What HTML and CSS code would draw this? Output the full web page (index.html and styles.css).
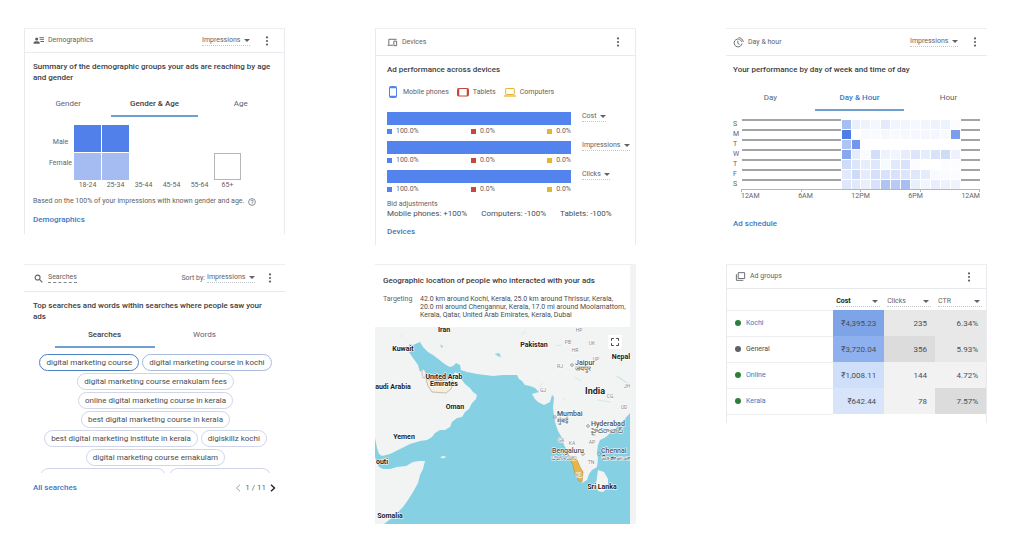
FILE: index.html
```html
<!DOCTYPE html>
<html lang="en">
<head>
    <meta charset="UTF-8">
    <meta name="viewport" content="width=device-width, initial-scale=1.0">
    <title>Campaign Overview</title>
    <link rel="stylesheet" href="styles.css">
</head>
<body>

<main class="dashboard">

    <!-- Demographics -->
    <section class="card compact sides">
        <header class="card-head">
            <svg class="icon" viewBox="0 0 12 10"><path d="M4 1.6a1.7 1.7 0 1 1 0 3.4 1.7 1.7 0 0 1 0-3.4zM.6 8.6V7.4C.8 6.200 2.600 5.700 4 5.700s3.200.5 3.400 1.700v1.200zM7 1.500h5v1H7zM7.300 3.500H12v1H7.300zM8 5.500h4v1H8z" fill="#5f6368"/></svg>
            <span class="name">Demographics</span>
            <label class="pick"><select aria-label="Metric"><option>Impressions</option></select></label>
            <button class="more" aria-label="More options"><svg viewBox="0 0 4 10"><circle cx="2" cy="1.400" r="1.100"/><circle cx="2" cy="5" r="1.100"/><circle cx="2" cy="8.600" r="1.100"/></svg></button>
        </header>
        <h2>Summary of the demographic groups your ads are reaching by age and gender</h2>
        <nav class="tabs spaced">
            <button>Gender</button>
            <button class="on dark">Gender &amp; Age</button>
            <button>Age</button>
        </nav>
        <div class="age-chart">
            <div class="genders"><span>Male</span><span>Female</span></div>
            <div class="squares">
                <i class="strong"></i><i class="strong"></i><i></i><i></i><i></i><i></i>
                <i class="soft"></i><i class="soft"></i><i></i><i></i><i></i><i class="empty"></i>
                <span>18-24</span><span>25-34</span><span>35-44</span><span>45-54</span><span>55-64</span><span>65+</span>
            </div>
        </div>
        <p class="note">Based on the 100% of your impressions with known gender and age.
            <svg class="help" viewBox="0 0 8 8" fill="none" stroke="#5f6368" stroke-width=".7"><circle cx="4" cy="4" r="3.400"/><path d="M2.900 3.200c0-1.500 2.300-1.500 2.300 0C5.200 4 4 4 4 5M4 5.500v.8"/></svg>
        </p>
        <a class="more-link" href="#">Demographics</a>
    </section>

    <!-- Devices -->
    <section class="card sides devices">
        <header class="card-head">
            <svg class="icon" viewBox="0 0 12 10" fill="none" stroke="#5f6368"><path d="M10.500 1.500H2v6M.5 8h6"/><path d="M7.500 3.500h3v5h-3z"/></svg>
            <span class="name">Devices</span>
            <button class="more" aria-label="More options"><svg viewBox="0 0 4 10"><circle cx="2" cy="1.400" r="1.100"/><circle cx="2" cy="5" r="1.100"/><circle cx="2" cy="8.600" r="1.100"/></svg></button>
        </header>
        <h2>Ad performance across devices</h2>
        <div class="legend">
            <span><svg viewBox="0 0 12 12" fill="none" stroke="#5383ec"><rect x="2.500" y=".5" width="7" height="11" rx="1"/><path d="M2.500 1.500h7M2.500 10.500h7" stroke-width="1.500"/></svg>Mobile phones</span>
            <span><svg viewBox="0 0 12 12" fill="none" stroke="#c5483c"><rect x=".5" y="2.500" width="11" height="7.500" rx="1"/><path d="M1.500 2.500v7.500M10.500 2.500v7.500" stroke-width="1.500"/></svg>Tablets</span>
            <span><svg viewBox="0 0 12 12" fill="none" stroke="#e3b62f"><rect x="1.700" y="2.500" width="8.600" height="6" rx=".5"/><path d="M0 10h12" stroke-width="1.300"/></svg>Computers</span>
        </div>
        <div class="metric">
            <div class="split">
                <div class="bar"></div>
                <ul><li>100.0%</li><li class="red">0.0%</li><li class="yellow">0.0%</li></ul>
            </div>
            <label class="pick"><select aria-label="First metric"><option>Cost</option></select></label>
        </div>
        <div class="metric">
            <div class="split">
                <div class="bar"></div>
                <ul><li>100.0%</li><li class="red">0.0%</li><li class="yellow">0.0%</li></ul>
            </div>
            <label class="pick"><select aria-label="Second metric"><option>Impressions</option></select></label>
        </div>
        <div class="metric">
            <div class="split">
                <div class="bar"></div>
                <ul><li>100.0%</li><li class="red">0.0%</li><li class="yellow">0.0%</li></ul>
            </div>
            <label class="pick"><select aria-label="Third metric"><option>Clicks</option></select></label>
        </div>
        <p class="bid-title">Bid adjustments</p>
        <p class="bids"><span>Mobile phones: +100%</span><span>Computers: -100%</span><span>Tablets: -100%</span></p>
        <a class="more-link" href="#">Devices</a>
    </section>

    <!-- Day & hour -->
    <section class="card schedule">
        <header class="card-head">
            <svg class="icon" viewBox="0 0 12 12" fill="none" stroke="#5f6368"><path d="M6.500 2.300A4.300 4.300 0 1 0 9.800 7"/><path d="M5.300 4v3l1.800 1.200M6 .7c2.800 0 5 2 5.200 4.800M7 2.700c1.300.3 2.200 1.200 2.500 2.500"/></svg>
            <span class="name">Day &amp; hour</span>
            <label class="pick"><select aria-label="Metric"><option>Impressions</option></select></label>
            <button class="more" aria-label="More options"><svg viewBox="0 0 4 10"><circle cx="2" cy="1.400" r="1.100"/><circle cx="2" cy="5" r="1.100"/><circle cx="2" cy="8.600" r="1.100"/></svg></button>
        </header>
        <h2>Your performance by day of week and time of day</h2>
        <nav class="tabs spaced wide">
            <button>Day</button>
            <button class="on">Day &amp; Hour</button>
            <button>Hour</button>
        </nav>
        <div class="heat">
            <div id="heatRows"></div>
            <div class="ticks"><i></i><i></i><i></i><i></i></div>
            <div class="hours"><span>12AM</span><span>6AM</span><span>12PM</span><span>6PM</span><span>12AM</span></div>
        </div>
        <a class="more-link" href="#">Ad schedule</a>
    </section>

    <!-- Searches -->
    <section class="card searches">
        <header class="card-head">
            <svg class="icon" viewBox="0 0 12 10" fill="none" stroke="#5f6368" stroke-width="1.200"><circle cx="5" cy="4" r="2.700"/><path d="M7 6l3.200 3.200"/></svg>
            <span class="name dotted">Searches</span>
            <span class="sort">Sort by:</span>
            <label class="pick"><select aria-label="Sort by"><option>Impressions</option></select></label>
            <button class="more" aria-label="More options"><svg viewBox="0 0 4 10"><circle cx="2" cy="1.400" r="1.100"/><circle cx="2" cy="5" r="1.100"/><circle cx="2" cy="8.600" r="1.100"/></svg></button>
        </header>
        <h2>Top searches and words within searches where people saw your ads</h2>
        <nav class="tabs pair">
            <button class="on dark">Searches</button>
            <button>Words</button>
        </nav>
        <div class="chips">
            <div><button class="picked">digital marketing course</button><button class="near">digital marketing course in kochi</button></div>
            <div><button>digital marketing course ernakulam fees</button></div>
            <div><button>online digital marketing course in kerala</button></div>
            <div><button>best digital marketing course in kerala</button></div>
            <div><button>best digital marketing institute in kerala</button><button>digiskillz kochi</button></div>
            <div><button>digital marketing course ernakulam</button></div>
            <div class="cut"><i></i><i></i></div>
        </div>
        <footer>
            <a href="#">All searches</a>
            <div class="pager">
                <button aria-label="Previous"><svg viewBox="0 0 6 8" fill="none" stroke="#9aa0a6"><path d="M5 .8L1.500 4 5 7.200"/></svg></button>
                <span>1 / 11</span>
                <button aria-label="Next"><svg viewBox="0 0 6 8" fill="none" stroke="#202124" stroke-width="1.400"><path d="M1 .8L4.500 4 1 7.200"/></svg></button>
            </div>
        </footer>
    </section>

    <!-- Locations -->
    <section class="card geo">
        <h2>Geographic location of people who interacted with your ads</h2>
        <dl>
            <dt>Targeting</dt>
            <dd>42.0 km around Kochi, Kerala, 25.0 km around Thrissur, Kerala,<br>20.0 mi around Chengannur, Kerala, 17.0 mi around Moolamattom,<br>Kerala, Qatar, United Arab Emirates, Kerala, Dubai</dd>
        </dl>
        <div class="map">
            <svg viewBox="0 0 255 197">
                <rect width="255" height="197" fill="#f2f3f3"/>
                <path class="sea" d="M34 17L38 18L45 15L48 20L53 25L58 28L62 31L67 35L71 38L75 40L78 39L81 36L85 38L86 43L92 45L102 47L110 48L118 49L128 48L142 48L144 52L147 54L150 58L155 59L160 61L164 65L157 67L160 72L163 75L169 78L175 75L177 68L179 70L178 81L180 95L183 104L187 111L189 118L192 123L195 130L198 136L200 144L203 152L207 156L212 153L214 147L217 143L222 140L223 132L222 125L223 118L225 113L231 110L235 106L240 103L243 98L249 93L255 86V197H9L18 190L28 180L33 173L38 165L43 156L45 148L48 142L50 134L44 134L38 135L31 139L22 140L15 142L8 142L4 140L2 136L0 130V111L2 121L4 127L7 129L15 127L25 122L35 117L45 114L52 113L57 110L60 106L65 103L70 103L75 100L77 95L82 91L87 90L90 85L94 82L97 76L101 72L102 68L98 65L95 61L90 57L87 53L84 47L80 45L78 50L72 53L62 54L54 53L51 48L50 43L48 42L45 45L43 38L38 31L34 25z"/>
                <path d="M223 143L229 145L233 152L233 160L228 165L223 164L221 157z" fill="#f2f3f3"/>
                <path d="M65 130l4-1 2 1-3 1.500z" fill="#f2f3f3"/>
                <path class="lake" d="M120 27l4-1 2 4-3-1zM65 18l3 1-1 2zM26 8l1 2M150 4l-3 4M164 60l4-4M234 9l6 3 5 5M241 49l4 2 10 7M199 50l8 4M181 19l5-1M188 71l3 2M222 73l14 2"/>
                <path d="M51 52l3 1 8 1 10-1 4-3 2 5-2 7-5 4-14-1-4-6z" fill="#f5efdc" stroke="#9b9b96" stroke-width=".6"/>
                <path d="M47 43l2-1 2 4-1 5-2 0-1-4z" fill="#f5efdc" stroke="#9b9b96" stroke-width=".5"/>
                <path d="M193 129l5 1 4 3 3 7 3 5-1 10-3-1-4-7-2-9z" fill="#eab649" stroke="#b78c35" stroke-width=".6"/>

                <g class="states">
                    <text x="204" y="5">HP</text><text x="193" y="17">PB</text><text x="217" y="18">UK</text>
                    <text x="200" y="25">HR</text><text x="185" y="41">RJ</text><text x="221" y="34">UP</text>
                    <text x="168" y="65">GJ</text><text x="235" y="71">CG</text><text x="249" y="82">OD</text>
                    <text x="252" y="61">JH</text><text x="186" y="115">GA</text><text x="197" y="118">KA</text>
                    <text x="217" y="117">AP</text><text x="216" y="137">TN</text><text x="204" y="150">KL</text>
                </g>
                <g class="cities">
                    <circle cx="197" cy="38" r="1.300"/><circle cx="180" cy="90" r="1.300"/><circle cx="213" cy="99" r="1.300"/>
                    <circle cx="208" cy="127" r="1.300"/><circle cx="224" cy="127" r="1.300"/>
                    <text x="200" y="38">Jaipur</text><text x="200" y="44">जयपुर</text>
                    <text x="182" y="89">Mumbai</text><text x="182" y="96">मुंबई</text>
                    <text x="216" y="99">Hyderabad</text><text x="216" y="106">హైదరాబాద్</text>
                    <text x="177" y="126">Bengaluru</text><text x="176" y="133">ಬೆಂಗಳೂರು</text>
                    <text x="226" y="126">Chennai</text><text x="226" y="133">சென்னை</text>
                </g>
                <g class="countries">
                    <text x="69" y="5">Iran</text><text x="28" y="24">Kuwait</text><text x="159" y="20">Pakistan</text>
                    <text x="246" y="32">Nepal</text><text x="69" y="52">United Arab</text><text x="69" y="59">Emirates</text>
                    <text x="18" y="62">audi Arabia</text><text x="80" y="82">Oman</text><text x="29" y="112">Yemen</text>
                    <text x="7" y="137">outi</text><text x="15" y="191">Somalia</text><text x="227" y="162">Sri Lanka</text>
                    <text class="big" x="220" y="67">India</text>
                </g>
            </svg>
            <button class="expand" aria-label="Full screen"><svg viewBox="0 0 8 8" fill="none" stroke="#444"><path d="M.5 2.800V.5h2.300M5.200.5h2.300v2.300M7.500 5.200v2.300H5.200M2.800 7.500H.5V5.200"/></svg></button>
        </div>
    </section>

    <!-- Ad groups -->
    <section class="card compact sides groups">
        <header class="card-head">
            <svg class="icon" viewBox="0 0 12 10" fill="none" stroke="#5f6368"><path d="M3.500.8h7v6.400h-7zM1.500 2.500v6.700h7.500"/></svg>
            <span class="name">Ad groups</span>
            <button class="more" aria-label="More options"><svg viewBox="0 0 4 10"><circle cx="2" cy="1.400" r="1.100"/><circle cx="2" cy="5" r="1.100"/><circle cx="2" cy="8.600" r="1.100"/></svg></button>
        </header>
        <table>
            <thead>
                <tr>
                    <td></td>
                    <th><label class="pick"><select aria-label="Column 1"><option>Cost</option></select></label></th>
                    <th><label class="pick"><select aria-label="Column 2"><option>Clicks</option></select></label></th>
                    <th><label class="pick"><select aria-label="Column 3"><option>CTR</option></select></label></th>
                </tr>
            </thead>
            <tbody>
                <tr><td><a class="dot" href="#">Kochi</a></td><td class="b4">₹4,395.23</td><td class="g2">235</td><td class="g2">6.34%</td></tr>
                <tr><td><span class="dot paused">General</span></td><td class="b3">₹3,720.04</td><td class="g3">356</td><td class="g2">5.93%</td></tr>
                <tr><td><a class="dot" href="#">Online</a></td><td class="b2">₹1,008.11</td><td class="g1">144</td><td class="g1">4.72%</td></tr>
                <tr><td><a class="dot" href="#">Kerala</a></td><td class="b1">₹642.44</td><td class="g1">78</td><td class="g3">7.57%</td></tr>
            </tbody>
        </table>
    </section>

</main>

<script src="heat.js"></script>
</body>
</html>
```
FILE: styles.css
```css
* {
    box-sizing: border-box;
}
body {
    margin: 0;
    background-color: #fff;
    color: #5f6368;
    font-family: Roboto, "Liberation Sans", sans-serif;
    font-size: 7px;
    line-height: 9px;
}
h2, p, dl, dd, ul {
    margin: 0;
    padding: 0;
}
button, select {
    font: inherit;
    color: inherit;
    background: none;
    border: none;
    padding: 0;
    margin: 0;
    cursor: pointer;
}
svg {
    display: block;
}
a {
    color: #3c78c3;
    font-weight: 500;
    text-decoration: none;
}
.dashboard {
    display: grid;
    grid-template-columns: repeat(3, minmax(0, 1fr));
    align-items: start;
    gap: 19px 90px;
    padding: 28px 37px 8px 24px;
}

/* Cards */
.card {
    --pad: 9px;
    display: flex;
    flex-direction: column;
    padding: 0 var(--pad);
    border-top: 1px solid #eceef0;
    overflow: hidden;
}
.card.sides {
    border-left: 1px solid #e8eaed;
    border-right: 1px solid #e8eaed;
}
.card.compact {
    --pad: 8px;
}
.card.devices {
    --pad: 11px;
}
.card.schedule {
    --pad: 7px;
}
.card-head {
    display: flex;
    align-items: center;
    gap: 4px;
    height: 27px;
    margin: 0 calc(var(--pad) * -1);
    padding: 0 12px 0 var(--pad);
    border-bottom: 1px solid #e8eaed;
}
.compact .card-head {
    height: 24px;
}
.schedule .card-head {
    padding-right: 7px;
}
.icon {
    width: 11px;
    height: 11px;
}
.name {
    margin-right: auto;
}
.name.dotted {
    border-bottom: 1px dashed #80868b;
}
.more {
    width: 10px;
    margin-left: 8px;
}
.more svg {
    width: 4px;
    height: 10px;
    margin: 0 auto;
    fill: #5f6368;
}
.pick {
    display: inline-flex;
    align-items: center;
    gap: 3px;
    border-bottom: 1px dotted #c4c7ca;
}
.pick select {
    appearance: none;
}
.pick::after {
    content: "";
    border: 3px solid transparent;
    border-top-color: #5f6368;
    border-bottom: none;
}
h2 {
    padding-top: 8px;
    color: #3c4043;
    font-size: 8px;
    font-weight: 500;
    line-height: 11px;
}
.more-link {
    font-size: 8px;
    align-self: flex-start;
}

/* Tabs */
.tabs {
    display: flex;
    margin: 0 calc(var(--pad) * -1);
}
.tabs.spaced {
    margin-top: 8px;
}
.tabs.wide {
    margin-top: 10px;
}
.tabs button {
    flex: 1;
    height: 26px;
    font-size: 8px;
    border-bottom: 2px solid transparent;
}
.tabs.wide button {
    flex: 0 0 89px;
}
.tabs.pair {
    justify-content: center;
}
.tabs.pair button {
    flex: 0 0 100px;
}
.tabs .on {
    color: #3c78c3;
    font-weight: 500;
    border-bottom-color: #6f9fcf;
}
.tabs .on.dark {
    color: #3c4043;
}

/* Demographics */
.age-chart {
    display: flex;
    margin-top: 8px;
}
.genders {
    display: flex;
    flex-direction: column;
    justify-content: center;
    gap: 12px;
    width: 41px;
    height: 56px;
    padding-left: 14px;
    text-align: center;
}
.squares {
    display: grid;
    grid-template-columns: repeat(6, 27px);
    grid-template-rows: 27px 27px 9px;
    gap: 1px;
    text-align: center;
}
.squares .strong {
    background-color: #5180ea;
}
.squares .soft {
    background-color: #a5bcf3;
}
.squares .empty {
    border: 1px solid #b4b6b8;
}
.note {
    display: flex;
    align-items: center;
    gap: 4px;
    margin: 7px 0 9px;
}
.help {
    width: 8px;
    height: 8px;
}
.compact .more-link {
    margin-bottom: 10px;
}

/* Devices */
.legend {
    display: flex;
    gap: 8px;
    margin: 11px 0 14px;
}
.legend span {
    display: flex;
    align-items: center;
    gap: 4px;
}
.legend svg {
    width: 12px;
    height: 12px;
}
.metric {
    display: flex;
    align-items: flex-start;
    gap: 11px;
    margin-bottom: 5px;
}
.split {
    flex: 0 0 184px;
}
.bar {
    height: 13px;
    background-color: #5383ec;
}
.split ul {
    display: flex;
    justify-content: space-between;
    padding-top: 2px;
    list-style: none;
}
.split li {
    display: flex;
    align-items: center;
    gap: 4px;
}
.split li::before {
    content: "";
    width: 5px;
    height: 5px;
    background-color: #5383ec;
}
.split .red::before {
    background-color: #c5483c;
}
.split .yellow::before {
    background-color: #e3b62f;
}
.bid-title {
    margin-top: 1px;
}
.bids {
    display: flex;
    gap: 14px;
    margin-bottom: 9px;
    font-size: 8px;
    white-space: nowrap;
    color: #4a4e52;
}
.devices .more-link {
    margin-bottom: 9px;
}

/* Day & hour */
.heat {
    margin: 8px 0 18px;
}
.heat-row {
    display: grid;
    grid-template-columns: 8px repeat(24, minmax(0, 1fr));
    column-gap: 1px;
    height: 10px;
}
.heat-row b {
    padding-top: 1px;
    font-weight: 400;
}
.heat-row .early {
    grid-column: span 10;
    border-top: 2px solid #a3a4a5;
}
.heat-row .late {
    grid-column: span 2;
    border-top: 2px solid #a3a4a5;
}
.heat-row i {
    margin-top: 1px;
}
.ticks {
    display: flex;
    height: 3px;
    margin-left: 8px;
    border-top: 1px solid #b4b6b8;
    border-right: 1px solid #b4b6b8;
}
.ticks i {
    flex: 1;
    border-left: 1px solid #b4b6b8;
}
.hours {
    display: flex;
    justify-content: space-between;
    margin-left: 8px;
}

/* Searches */
.searches .card-head {
    padding-right: 10px;
}
.searches .more {
    margin-left: 6px;
}
.sort {
    margin-right: -2px;
}
.chips {
    display: flex;
    flex-direction: column;
    gap: 2px;
    margin: 6px -2px 0 0;
    font-size: 8px;
}
.chips div {
    display: flex;
    justify-content: center;
    gap: 3px;
}
.chips button {
    height: 17px;
    padding: 0 6px;
    border: 1px solid #d0d5ea;
    border-radius: 9px;
    color: #4a4e52;
    white-space: nowrap;
}
.chips .near {
    border-color: #a9bcdf;
}
.chips .picked {
    border-color: #4a80c2;
}
.chips .cut {
    height: 5px;
    overflow: hidden;
}
.chips .cut i {
    width: 126px;
    height: 17px;
    border: 1px solid #d0d5ea;
    border-radius: 9px;
}
.chips .cut i + i {
    width: 102px;
}
.searches footer {
    display: flex;
    justify-content: space-between;
    align-items: center;
    margin: 10px 0 9px;
    font-size: 8px;
}
.pager {
    display: flex;
    align-items: center;
    gap: 4px;
}
.pager svg {
    width: 6px;
    height: 8px;
}

/* Locations */
.geo {
    padding: 0;
    border-right: 6px solid #f1f3f4;
}
.geo h2 {
    padding: 10px 8px 0;
}
.geo dl {
    display: grid;
    grid-template-columns: 37px 1fr;
    padding: 9px 0 8px 8px;
    line-height: 8px;
}
.geo dd {
    color: #4a4e52;
    white-space: nowrap;
}
.map {
    position: relative;
}
.map > svg {
    width: 100%;
}
.map text {
    paint-order: stroke;
    stroke: #fff;
    stroke-width: 1px;
}
.sea {
    fill: #86d0e4;
}
.lake {
    fill: #86d0e4;
    stroke: #b5dfea;
    stroke-width: .5px;
}
.states {
    font-size: 5px;
    text-anchor: middle;
    fill: #80868b;
}
.cities {
    font-size: 7px;
    font-weight: 500;
    fill: #4a4e52;
}
.cities circle {
    fill: #fff;
    stroke: #5f6368;
    stroke-width: .6px;
}
.countries {
    font-size: 7px;
    font-weight: 700;
    text-anchor: middle;
    fill: #202124;
}
.countries .big {
    font-size: 9px;
}
.expand {
    position: absolute;
    top: 8px;
    right: 8px;
    padding: 3px;
    background-color: #fff;
}
.expand svg {
    width: 8px;
    height: 8px;
}

/* Ad groups */
.groups {
    padding-bottom: 8px;
}
table {
    width: calc(100% + var(--pad) * 2);
    margin: 0 calc(var(--pad) * -1);
    border-collapse: collapse;
    table-layout: fixed;
}
thead td {
    width: 41%;
}
th {
    height: 21px;
    padding: 4px 4px 0 3px;
    font-weight: 400;
}
th .pick {
    display: flex;
    justify-content: space-between;
    padding-right: 2px;
}
th:nth-child(2) {
    color: #202124;
    font-weight: 700;
}
tbody td {
    height: 26px;
    padding: 0 8px;
    border-top: 1px solid #eceef0;
    font-size: 8px;
    text-align: right;
    color: #4a4e52;
}
tbody td + td {
    border-top: none;
}
tbody td:first-child {
    font-size: 7px;
    text-align: left;
}
tbody tr:last-child td:first-child {
    border-bottom: 1px solid #eceef0;
}
tbody a {
    font-weight: 400;
}
.dot {
    display: flex;
    align-items: center;
    gap: 5px;
}
.dot::before {
    content: "";
    width: 6px;
    height: 6px;
    border-radius: 50%;
    background-color: #2f7d3b;
}
.dot.paused::before {
    background-color: #5f6368;
}
.b1 { background-color: #d8e4fa; }
.b2 { background-color: #cfdff9; }
.b3 { background-color: #8fb0ef; }
.b4 { background-color: #7ea4e8; }
.g1 { background-color: #f2f2f2; }
.g2 { background-color: #e8e8e8; }
.g3 { background-color: #dcdcdc; }
```
FILE: heat.js
```javascript
// Share of impressions per hour, 10AM to 10PM
const days = [
    ['S', [.5, .12, .1, .06, .16, .08, .08, .05, .08, .1, .1, .02]],
    ['M', [1, 0, .04, .04, .05, .04, .05, .05, .06, .06, .04, .75]],
    ['T', [.45, .8, 0, 0, 0, 0, 0, 0, 0, 0, 0, 0]],
    ['W', [.68, .15, .03, .25, .1, .08, .14, .2, .15, .22, .27, .1]],
    ['T', [.27, .2, .14, .18, .04, .17, .22, .02, 0, 0, .02, .02]],
    ['F', [.17, .28, .15, .24, .22, .22, .2, .18, .15, .04, .03, .02]],
    ['S', [.18, .17, .12, .22, .45, .4, .5, .12, .08, .13, .11, .09]]
];

const heatRows = document.getElementById('heatRows');

days.forEach(([day, hours]) => {
    const row = document.createElement('div');
    row.className = 'heat-row';
    row.innerHTML = `<b>${day}</b><div class="early"></div>`
        + hours.map(v => `<i style="background-color: rgba(79, 125, 230, ${v})"></i>`).join('')
        + '<div class="late"></div>';
    heatRows.appendChild(row);
});
```
